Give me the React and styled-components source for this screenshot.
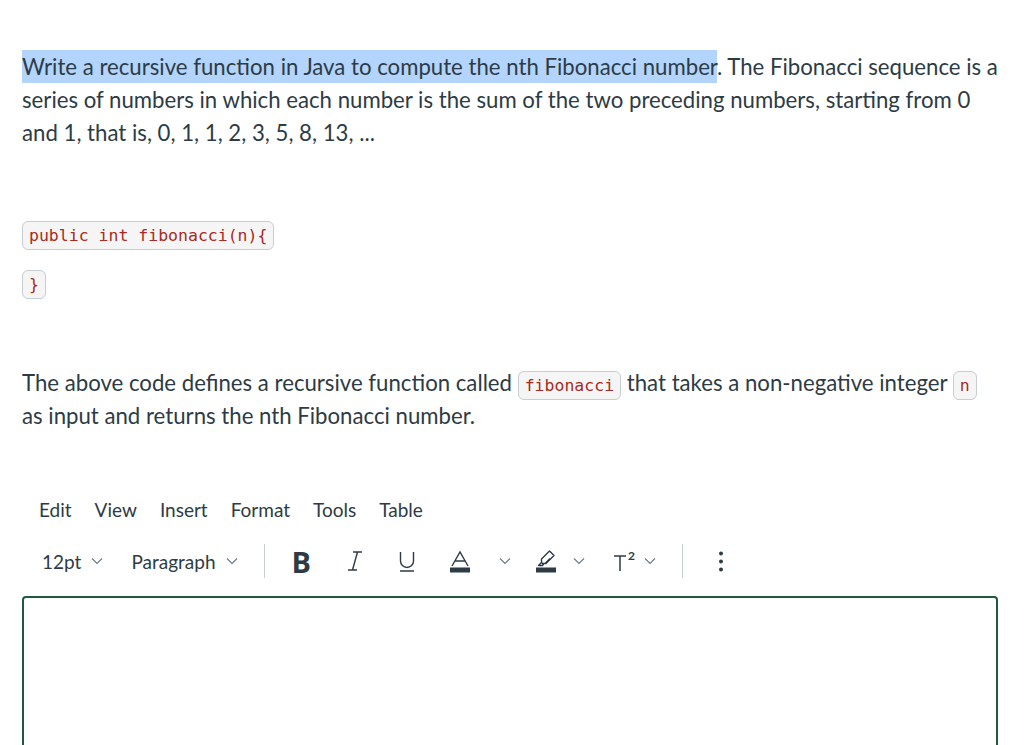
import React from "react";
import styled, { createGlobalStyle } from "styled-components";

const GlobalStyle = createGlobalStyle`
  html, body {
    margin: 0;
    padding: 0;
    background: #ffffff;
  }
  body {
    font-family: Lato, "Open Sans", sans-serif;
    color: #2d3b45;
  }
`;

const Page = styled.div`
  width: 1024px;
  height: 745px;
  overflow: hidden;
  box-sizing: border-box;
  padding: 50px 24px 0 22px;
`;

const Text = styled.p`
  margin: 0;
  font-size: 22.2px;
  line-height: 33px;
  margin-top: ${props => props.gap || 0}px;
`;

const Selected = styled.span`
  background: #b3d4fc;
  padding: 3.2px 0;
`;

const CodeLine = styled.p`
  margin: 0;
  margin-top: ${props => props.gap || 0}px;
  line-height: 33px;
  font-size: 22.2px;
`;

const Code = styled.code`
  font-family: "DejaVu Sans Mono", "Liberation Mono", monospace;
  font-size: 16.5px;
  line-height: 22px;
  color: #a82a22;
  background: #f5f5f5;
  border: 1px solid #c7cdd1;
  border-radius: 6px;
  padding: 4px 6px;
`;

const MenuBar = styled.div`
  display: flex;
  align-items: center;
  height: 40px;
  margin-top: 57px;
  padding-left: 17px;
  gap: 23px;
  font-size: 19px;
`;

const MenuItem = styled.span`
  color: #2d3b45;
`;

const ToolBar = styled.div`
  display: flex;
  align-items: center;
  height: 48px;
  margin-top: 8px;
  padding-left: 20px;
`;

const Select = styled.div`
  display: flex;
  align-items: center;
  gap: 10px;
  font-size: 19px;
  margin-right: ${props => props.space || 0}px;
`;

const Separator = styled.div`
  width: 1px;
  height: 34px;
  background: #c7cdd1;
  margin: 0 ${props => props.right || 0}px 0 ${props => props.left || 0}px;
`;

const Button = styled.div`
  display: flex;
  align-items: center;
  gap: ${props => props.inner || 8}px;
  margin-right: ${props => props.space || 0}px;
`;

const BoldGlyph = styled.span`
  font-family: "Open Sans", Lato, sans-serif;
  font-size: 29px;
  font-weight: 700;
  line-height: 1;
  color: #2d3b45;
`;

const Editor = styled.div`
  margin-top: 11px;
  width: 976px;
  height: 200px;
  box-sizing: border-box;
  border: 2px solid #1f5a3c;
  border-radius: 4px 4px 0 0;
`;

const Chevron = () => (
  <svg width="12" height="8" viewBox="0 0 12 8">
    <path d="M1 1.5 L6 6.5 L11 1.5" fill="none" stroke="#6b7780" strokeWidth="1.1" />
  </svg>
);

const ItalicIcon = () => (
  <svg width="20" height="24" viewBox="0 0 20 24">
    <path
      d="M8 3 H17 M12.5 3 L7.5 21 M3 21 H12"
      fill="none"
      stroke="#2d3b45"
      strokeWidth="1.4"
    />
  </svg>
);

const UnderlineIcon = () => (
  <svg width="18" height="24" viewBox="0 0 18 24">
    <path
      d="M2.5 3 V12 a6.5 6.5 0 0 0 13 0 V3 M2 22 H16"
      fill="none"
      stroke="#2d3b45"
      strokeWidth="1.4"
    />
  </svg>
);

const ColorIcon = () => (
  <svg width="22" height="24" viewBox="0 0 22 24">
    <path d="M3 17 L11 3 L19 17 M5.8 12 H16.2" fill="none" stroke="#2d3b45" strokeWidth="1.4" />
    <rect x="1" y="18.5" width="20" height="5" fill="#2d3b45" />
  </svg>
);

const HighlightIcon = () => (
  <svg width="22" height="24" viewBox="0 0 22 24">
    <path
      d="M14.5 2 L19 6.5 L11 14.5 L7.5 14.5 L6.5 13.5 L6.5 10 Z M6.5 13.5 L3.5 16.5 L7.5 16.5 L8.5 15 M10.5 14 L15 9.5"
      fill="none"
      stroke="#2d3b45"
      strokeWidth="1.4"
      strokeLinejoin="round"
    />
    <rect x="1" y="18.5" width="20" height="5" fill="#2d3b45" />
  </svg>
);

const SuperIcon = () => (
  <svg width="24" height="24" viewBox="0 0 24 24">
    <path d="M1 7 H13 M7 7 V22" fill="none" stroke="#2d3b45" strokeWidth="1.5" />
    <text x="15" y="11" fontFamily="Lato, sans-serif" fontWeight="700" fontSize="12" fill="#2d3b45">2</text>
  </svg>
);

const MoreIcon = () => (
  <svg width="24" height="24" viewBox="0 0 24 24">
    <circle cx="12" cy="4.5" r="2" fill="#2d3b45" />
    <circle cx="12" cy="12.5" r="2" fill="#2d3b45" />
    <circle cx="12" cy="20.5" r="2" fill="#2d3b45" />
  </svg>
);

export default function App() {
  return (
    <>
      <GlobalStyle />
      <Page>
        <Text>
          <Selected>
            Write a recursive function in Java to compute the nth Fibonacci number
          </Selected>
          . The Fibonacci sequence is a series of numbers in which each number is the
          sum of the two preceding numbers, starting from 0 and 1, that is, 0, 1, 1, 2,
          3, 5, 8, 13, ...
        </Text>

        <CodeLine gap={67}>
          <Code>public int fibonacci(n){"{"}</Code>
        </CodeLine>
        <CodeLine gap={16}>
          <Code>{"}"}</Code>
        </CodeLine>

        <Text gap={68}>
          The above code defines a recursive function called <Code>fibonacci</Code> that
          takes a non-negative integer <Code>n</Code> as input and returns the nth
          Fibonacci number.
        </Text>

        <MenuBar>
          {["Edit", "View", "Insert", "Format", "Tools", "Table"].map(item => (
            <MenuItem key={item}>{item}</MenuItem>
          ))}
        </MenuBar>

        <ToolBar>
          <Select space={28}>
            12pt <Chevron />
          </Select>
          <Select>
            Paragraph <Chevron />
          </Select>
          <Separator left={26} right={27} />
          <Button space={34}>
            <BoldGlyph>B</BoldGlyph>
          </Button>
          <Button space={33}>
            <ItalicIcon />
          </Button>
          <Button space={33}>
            <UnderlineIcon />
          </Button>
          <Button inner={28} space={24}>
            <ColorIcon />
            <Chevron />
          </Button>
          <Button inner={16} space={28}>
            <HighlightIcon />
            <Chevron />
          </Button>
          <Button inner={7}>
            <SuperIcon />
            <Chevron />
          </Button>
          <Separator left={26} right={26} />
          <Button>
            <MoreIcon />
          </Button>
        </ToolBar>

        <Editor />
      </Page>
    </>
  );
}
